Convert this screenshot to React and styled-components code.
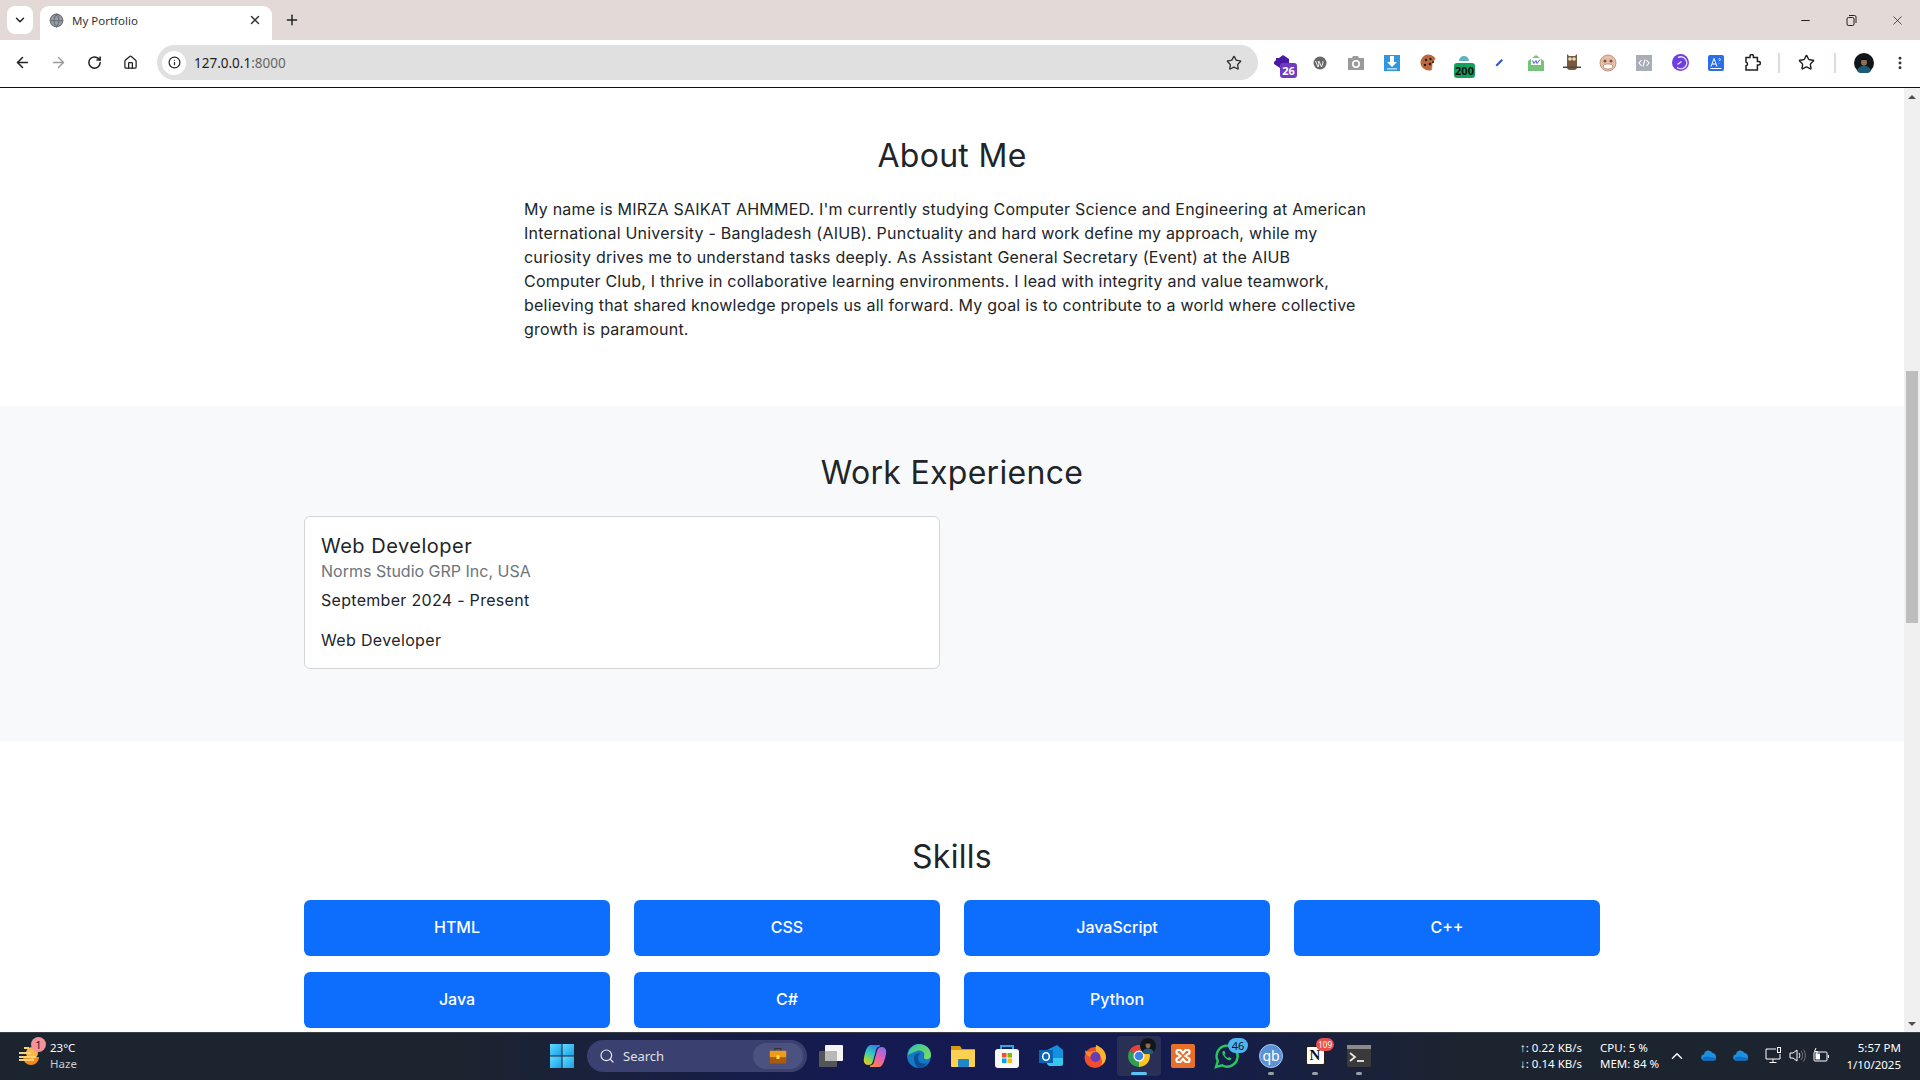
import styled, { createGlobalStyle } from 'styled-components'
import { ArrowLeft, ArrowRight, RotateCw, Home, Info, Star, MoreVertical, ChevronDown, ChevronUp, X, Plus, Search, Minus, Globe } from 'lucide-react'

const aboutLines = [
  "My name is MIRZA SAIKAT AHMMED. I'm currently studying Computer Science and Engineering at American",
  "International University - Bangladesh (AIUB). Punctuality and hard work define my approach, while my",
  "curiosity drives me to understand tasks deeply. As Assistant General Secretary (Event) at the AIUB",
  "Computer Club, I thrive in collaborative learning environments. I lead with integrity and value teamwork,",
  "believing that shared knowledge propels us all forward. My goal is to contribute to a world where collective",
  "growth is paramount.",
]
const skills = ['HTML', 'CSS', 'JavaScript', 'C++', 'Java', 'C#', 'Python']

const HouseIcon = () => (
  <svg width="24" height="24" viewBox="0 0 24 24">
    <path d="M2 11l2-2V7h3l4-3 6 4v6h-8l-1 3-6-4z" fill="#4a1aa6" />
  </svg>
)
const WordpressIcon = () => (
  <svg width="14" height="14" viewBox="0 0 14 14">
    <circle cx="7" cy="7" r="6.5" fill="#666" />
    <path d="M2.500 5 5 11l1-3-1-3M6 5l2.500 6L10 7c.3-1-.2-1.600-.5-2" fill="none" stroke="#eee" strokeWidth="1" />
  </svg>
)
const CameraIcon = () => (
  <svg width="18" height="16" viewBox="0 0 18 16">
    <path d="M1 3h4l1-2h5l1 2h5v12H1z" fill="#9b9b9b" />
    <circle cx="9" cy="9" r="3.200" fill="none" stroke="#fff" strokeWidth="1.600" />
  </svg>
)
const DownloadIcon = () => (
  <svg width="16" height="16" viewBox="0 0 16 16">
    <rect width="16" height="16" fill="#2f96e0" />
    <path d="M6 1h4v6h3l-5 5-5-5h3z" fill="#fff" />
    <rect x="3" y="13.400" width="10" height="1" fill="#fff" />
  </svg>
)
const CookieIcon = () => (
  <svg width="17" height="17" viewBox="0 0 17 17">
    <path d="M9 .5a8 8 0 1 0 7.500 8.500c-1.500 0-2.500-1-2.500-2-1.500 0-3-1.500-2.500-3C10 4 9 2 9 .5z" fill="#b9693c" transform="rotate(60 8.500 8.500)" />
    <g fill="#2e1c14">
      <circle cx="6" cy="6" r="1.200" /><circle cx="10.500" cy="5" r="1.200" /><circle cx="5" cy="11" r="1.200" /><circle cx="10" cy="10" r="1.300" /><circle cx="13" cy="8" r="1" />
    </g>
  </svg>
)
const LockIcon = () => (
  <svg width="12" height="16" viewBox="0 0 12 16">
    <path d="M1 6a5 5 0 0 1 10 0z" fill="#5fb3bd" />
  </svg>
)
const PenIcon = () => (
  <svg width="10" height="10" viewBox="0 0 10 10">
    <path d="M1 8 7 2l1.500 1.500-6 6z" fill="#2f55cf" transform="translate(-0.500 -1)" />
  </svg>
)
const MailIcon = () => (
  <svg width="16" height="18" viewBox="0 0 16 18">
    <path d="M0 7 8 1l8 6v10H0z" fill="#76c47a" />
    <rect x="3" y="4" width="10" height="7" fill="#fff" />
    <path d="m4.500 6.500 1.500 3 2-3 1 3 3-4" fill="none" stroke="#4a5fd0" strokeWidth="1" />
  </svg>
)
const OwlIcon = () => (
  <svg width="18" height="20" viewBox="0 0 18 20">
    <path d="M4 1l2 2h6l2-2v13a3 3 0 0 1-3 3H7a3 3 0 0 1-3-3z" fill="#7a5a3e" />
    <circle cx="7" cy="6" r="1.800" fill="#e8dcc8" /><circle cx="11" cy="6" r="1.800" fill="#e8dcc8" />
    <rect x="0" y="13.500" width="18" height="1.500" fill="#4a4a4a" />
  </svg>
)
const MonkeyIcon = () => (
  <svg width="18" height="20" viewBox="0 0 18 20">
    <circle cx="9" cy="10" r="8" fill="#e6bda6" stroke="#c59880" strokeWidth="1" />
    <circle cx="6" cy="8" r="1.500" fill="#7a5244" /><circle cx="12" cy="8" r="1.500" fill="#7a5244" />
    <ellipse cx="9" cy="13.500" rx="4.500" ry="2.500" fill="#fff" stroke="#a9806c" strokeWidth=".7" />
  </svg>
)
const CodeIcon = () => (
  <svg width="16" height="16" viewBox="0 0 16 16">
    <rect width="16" height="16" fill="#a9adb5" />
    <path d="M5.500 5 3 8l2.500 3M10.500 5 13 8l-2.500 3M9 4.500 7 11.500" fill="none" stroke="#fff" strokeWidth="1.100" />
  </svg>
)
const SpinIcon = () => (
  <svg width="17" height="17" viewBox="0 0 17 17">
    <circle cx="8.500" cy="8.500" r="8.500" fill="#6b3fe0" />
    <path d="M5 13.500a6 6 0 1 0 1-10M5.500 10.500l4-3" fill="none" stroke="#e9dcff" strokeWidth="1.500" />
  </svg>
)
const TranslateIcon = () => (
  <svg width="16" height="16" viewBox="0 0 16 16">
    <rect width="16" height="16" rx="2" fill="#2b6fe8" />
    <path d="M3 11.500 6 3.500 9 11.500M4 9h4M2.500 13.500h11M10.500 4c1-1 2.500 0 1.500 1.200l-1 1M11 8v.5" fill="none" stroke="#fff" strokeWidth="1" />
  </svg>
)
const PuzzleIcon = () => (
  <svg width="18" height="18" viewBox="0 0 18 18">
    <path d="M2 3.500h4V2.200a1.700 1.700 0 0 1 3.400 0v1.300h4v4h1.300a1.700 1.700 0 0 1 0 3.400h-1.300v5H2v-4a2 2 0 0 0 1.500-1.900A2 2 0 0 0 2 8.100z" fill="none" stroke="#1f1f1f" strokeWidth="1.500" transform="translate(1 0)" />
  </svg>
)
const AvatarIcon = ({ size }) => (
  <svg width={size} height={size} viewBox="0 0 20 20">
    <circle cx="10" cy="10" r="10" fill="#11161a" />
    <path d="M3 18c1-4 4-5 7-5s6 1 7 5a10 10 0 0 1-14 0z" fill="#1d5b78" />
    <ellipse cx="10" cy="9" rx="3" ry="3.800" fill="#8f6b55" />
    <path d="M7 7c0-3 6-3 6 0z" fill="#0b0b0b" />
  </svg>
)

const WeatherIcon = () => (
  <svg width="24" height="24" viewBox="0 0 24 24">
    <path d="M5 13h16a8 8 0 0 1-16 0z" fill="#f08c1e" />
    <circle cx="14" cy="9" r="6" fill="#f7b84a" />
    <g fill="#f5d27a">
      <rect x="6" y="3" width="5" height="2" /><rect x="1" y="8" width="12" height="2" /><rect x="1" y="12" width="17" height="2" /><rect x="1" y="15" width="15" height="2" />
    </g>
  </svg>
)
const WindowsIcon = () => (
  <svg width="24" height="24" viewBox="0 0 24 24">
    <defs>
      <linearGradient id="winBlue" x1="0" y1="0" x2="1" y2="1">
        <stop offset="0" stopColor="#5fdcff" /><stop offset="1" stopColor="#1a9ee8" />
      </linearGradient>
    </defs>
    <g fill="url(#winBlue)">
      <rect width="11.500" height="11.500" /><rect x="12.500" width="11.500" height="11.500" /><rect y="12.500" width="11.500" height="11.500" /><rect x="12.500" y="12.500" width="11.500" height="11.500" />
    </g>
  </svg>
)
const BriefcaseIcon = () => (
  <svg width="24" height="24" viewBox="0 0 24 24">
    <path d="M8 5V2h8v3" fill="none" stroke="#333" strokeWidth="1.500" />
    <rect x="1" y="5" width="22" height="9" fill="#f09a1a" />
    <rect x="1" y="14" width="22" height="8" fill="#a85a10" />
    <rect x="10" y="11" width="4" height="5" fill="#ffe24a" />
  </svg>
)
const TaskViewIcon = () => (
  <svg width="26" height="24" viewBox="0 0 26 24">
    <rect x="7" y="1" width="18" height="16" rx="1" fill="#f4f4f4" />
    <rect x="1" y="7" width="18" height="16" rx="1" fill="#5a5a5a" fillOpacity=".92" />
    <rect x="7" y="7" width="12" height="10" fill="#b8b8b8" />
  </svg>
)
const CopilotIcon = () => (
  <svg width="24" height="24" viewBox="0 0 24 24">
    <defs>
      <linearGradient id="copA" x1="0.700" y1="0" x2="0.200" y2="1">
        <stop offset="0" stopColor="#2c7fe8" /><stop offset=".45" stopColor="#35c9c0" /><stop offset=".75" stopColor="#8fd84a" /><stop offset="1" stopColor="#f5c32c" />
      </linearGradient>
      <linearGradient id="copB" x1="0.800" y1="0" x2="0.200" y2="1">
        <stop offset="0" stopColor="#8a6cf0" /><stop offset=".5" stopColor="#e85fb0" /><stop offset="1" stopColor="#f58a3c" />
      </linearGradient>
    </defs>
    <path d="M8 1h8c2 0 1 2-1 2-2 1-2 4-3 7l-2 7c-1 3-2 4-5 4-3 0-5-3-4-7C2 8 4 1 8 1z" fill="url(#copA)" />
    <path d="M16 23H8c-2 0-1-2 1-2 2-1 2-4 3-7l2-7c1-3 2-4 5-4 3 0 5 3 4 7-1 5-3 13-7 13z" fill="url(#copB)" />
  </svg>
)
const EdgeIcon = () => (
  <svg width="24" height="24" viewBox="0 0 24 24">
    <defs>
      <linearGradient id="edgeA" x1="0" y1="0" x2="1" y2="1">
        <stop offset="0" stopColor="#35c1a5" /><stop offset="1" stopColor="#7fe05a" />
      </linearGradient>
    </defs>
    <circle cx="12" cy="12" r="12" fill="#1478c8" />
    <path d="M1 11C2 4 7 0 12 0c7 0 12 5 12 11 0 3-3 5-6 4-2-1 0-3-1-6-1-2-4-3-7-2-4 1-7 3-9 4z" fill="url(#edgeA)" />
    <path d="M7 14c0-4 4-6 7-4-2 0-3 2-3 4 0 4 4 7 9 5-2 3-5 5-8 5-3-1-5-6-5-10z" fill="#0c4f94" />
  </svg>
)
const FolderIcon = () => (
  <svg width="24" height="22" viewBox="0 0 24 22">
    <path d="M0 1h9l2 3h13v3H0z" fill="#d99a10" />
    <rect y="5" width="24" height="17" rx="1" fill="#fcd050" />
    <rect x="7" y="14" width="11" height="8" rx="1" fill="#1f86c8" />
  </svg>
)
const StoreIcon = () => (
  <svg width="24" height="24" viewBox="0 0 24 24">
    <path d="M6 6V2h12v4" fill="none" stroke="#2aa8e0" strokeWidth="2" />
    <rect y="5" width="24" height="19" rx="3" fill="#f8f8f8" />
    <rect x="7" y="9" width="4.500" height="4.500" fill="#f25022" /><rect x="12.500" y="9" width="4.500" height="4.500" fill="#7fba00" />
    <rect x="7" y="14.500" width="4.500" height="4.500" fill="#00a4ef" /><rect x="12.500" y="14.500" width="4.500" height="4.500" fill="#ffb900" />
  </svg>
)
const OutlookIcon = () => (
  <svg width="24" height="24" viewBox="0 0 24 24">
    <path d="M8 6 18 1l6 5v12H8z" fill="#1490df" />
    <path d="M8 14h16v6a2 2 0 0 1-2 2H10l-2-2z" fill="#35c8ee" />
    <rect y="6" width="14" height="13" fill="#0a64b8" />
    <ellipse cx="7" cy="12.500" rx="3.300" ry="3.800" fill="none" stroke="#fff" strokeWidth="1.600" />
  </svg>
)
const FirefoxIcon = () => (
  <svg width="24" height="24" viewBox="0 0 24 24">
    <circle cx="12" cy="13.500" r="10.500" fill="#f04f30" />
    <path d="M13 1c5 2 10 6 10 12 0 4-2 7-5 8 2-3 1-7-2-9-2-2-4-5-3-11z" fill="#fbb42c" />
    <path d="M2 6c1 2 3 1 5 2 3-2 6-1 8 1-5 0-2 4-6 4-4 0-7-3-7-7z" fill="#ff8a2c" />
    <circle cx="12.500" cy="13" r="5" fill="#6a3bb8" />
  </svg>
)
const ChromeIcon = () => (
  <svg width="24" height="24" viewBox="0 0 24 24">
    <path d="M12 12 2.500 6.500a11 11 0 0 1 19 0z" fill="#e0443a" />
    <path d="M12 12 2.500 6.500A11 11 0 0 0 12 23z" fill="#2f9e52" />
    <path d="M12 12 21.500 6.500A11 11 0 0 1 12 23z" fill="#f9c51c" />
    <circle cx="12" cy="12" r="5.500" fill="#fff" /><circle cx="12" cy="12" r="4.300" fill="#3b82e6" />
  </svg>
)
const XamppIcon = () => (
  <svg width="24" height="24" viewBox="0 0 24 24">
    <rect width="24" height="24" rx="2" fill="#e8702a" />
    <path d="M7 6h2.500L12 9l2.500-3H17c2 0 2 4 0 4l-2.500 2 2.500 2c2 0 2 4 0 4h-2.500L12 15l-2.500 3H7c-2 0-2-4 0-4l2.500-2L7 10c-2 0-2-4 0-4z" fill="none" stroke="#fff" strokeWidth="2.200" />
  </svg>
)
const WhatsappIcon = () => (
  <svg width="26" height="26" viewBox="0 0 26 26">
    <path d="M2 24l1.800-6A10.500 10.500 0 1 1 8 22.300z" fill="none" stroke="#25c95e" strokeWidth="2.400" />
    <path d="M9 8c-1 1-1 3 1 5.500s5 4.500 6.500 3.500l1-1.500-2.500-1.500-1 1c-1.500-.5-3-2-3.500-3.500l1-1L10.500 8z" fill="#25c95e" />
  </svg>
)
const TerminalIcon = () => (
  <svg width="24" height="24" viewBox="0 0 24 24">
    <rect y="1" width="24" height="22" rx="2" fill="#3a3a3a" />
    <rect y="1" width="24" height="4" fill="#8a8a8a" />
    <path d="m3 9 5 4-5 4" fill="none" stroke="#e8e8e8" strokeWidth="1.800" />
    <path d="M10 17h7" stroke="#e8e8e8" strokeWidth="1.800" />
  </svg>
)

const CloudIcon = () => (
  <svg width="16" height="11" viewBox="0 0 16 11">
    <path d="M3.500 10.500a3 3 0 0 1-.5-6 4.500 4.500 0 0 1 8.500-1.500A4 4 0 0 1 13 10.500z" fill="#1f8fe0" />
    <path d="M1 9c2-3 6-3 8-2l6 1c1 2-1 2.500-2 2.500H3.500C2 10.500 1.300 10 1 9z" fill="#0f6fc4" />
  </svg>
)
const MonitorIcon = () => (
  <svg width="17" height="17" viewBox="0 0 17 17" fill="none" stroke="#fff" strokeWidth="1">
    <path d="M11 2H1v10h14V7M8 12v3M4.500 15.500h7" />
    <rect x="12.500" y=".5" width="3" height="5" fill="#1c2430" />
  </svg>
)
const SpeakerIcon = () => (
  <svg width="17" height="15" viewBox="0 0 17 15" fill="none" stroke="#fff" strokeWidth="1">
    <path d="M1 5h3l4-3v11l-4-3H1z" />
    <path d="M10 5c1 1.500 1 3.500 0 5" />
    <path d="M12 3c2 2.500 2 6.500 0 9M14.300 1.500c2.700 3.500 2.700 8.500 0 12" stroke="#777" />
  </svg>
)
const BatteryIcon = () => (
  <svg width="17" height="15" viewBox="0 0 17 15" fill="none" stroke="#fff" strokeWidth="1">
    <rect x="1" y="4" width="13" height="9" rx="1" />
    <rect x="2.500" y="5.500" width="4.500" height="6" fill="#fff" stroke="none" />
    <path d="M15.500 7v3" />
    <path d="M3 0 1.500 3.500h3L3 7" />
  </svg>
)

function App() {
  return (
    <>
      <GlobalStyle />
      <Screen>
        <TabBar>
          <TabSearch><ChevronDown size={14} strokeWidth={2.5} /></TabSearch>
          <Tab>
            <Globe size={15} color="#6e7479" fill="#9aa0a6" />
            <TabTitle>My Portfolio</TabTitle>
            <X size={14} strokeWidth={2.5} color="#333" />
          </Tab>
          <NewTab><Plus size={16} strokeWidth={2.2} /></NewTab>
          <WindowControls>
            <WindowButton><Minus size={13} strokeWidth={2} /></WindowButton>
            <WindowButton>
              <svg width="11" height="11" viewBox="0 0 11 11" fill="none" stroke="#222"><rect x="1" y="2.500" width="7" height="8" rx="1.500" /><path d="M3 .5h5.500A1.500 1.500 0 0 1 10 2v6" /></svg>
            </WindowButton>
            <WindowButton><X size={15} strokeWidth={1.2} /></WindowButton>
          </WindowControls>
        </TabBar>
        <Toolbar>
          <NavButton><ArrowLeft size={17} strokeWidth={2.2} /></NavButton>
          <NavButton $off><ArrowRight size={17} strokeWidth={2} /></NavButton>
          <NavButton><RotateCw size={15} strokeWidth={2.4} /></NavButton>
          <NavButton><Home size={15} strokeWidth={2} /></NavButton>
          <Omnibox>
            <SiteInfo><Info size={13} strokeWidth={2.2} /></SiteInfo>
            <Url>127.0.0.1<UrlPort>:8000</UrlPort></Url>
            <Star size={16} strokeWidth={2} color="#333" />
          </Omnibox>
          <Extensions>
            <ExtButton><HouseIcon /><CountBadge $bg="#6f3ac4" $w={17}>26</CountBadge></ExtButton>
            <ExtButton><WordpressIcon /></ExtButton>
            <ExtButton><CameraIcon /></ExtButton>
            <ExtButton><DownloadIcon /></ExtButton>
            <ExtButton><CookieIcon /></ExtButton>
            <ExtButton><LockIcon /><CountBadge $bg="#14a05c" $color="#111" $w={21}>200</CountBadge></ExtButton>
            <ExtButton><PenIcon /></ExtButton>
            <ExtButton><MailIcon /></ExtButton>
            <ExtButton><OwlIcon /></ExtButton>
            <ExtButton><MonkeyIcon /></ExtButton>
            <ExtButton><CodeIcon /></ExtButton>
            <ExtButton><SpinIcon /></ExtButton>
            <ExtButton><TranslateIcon /></ExtButton>
            <ExtButton><PuzzleIcon /></ExtButton>
            <ToolDivider $gap={8} />
            <ExtButton><Star size={17} strokeWidth={2} color="#222" /></ExtButton>
            <ToolDivider $gap={10} />
            <ExtButton><AvatarIcon size={20} /></ExtButton>
            <ExtButton><MoreVertical size={16} strokeWidth={2.4} color="#333" /></ExtButton>
          </Extensions>
        </Toolbar>
        <Viewport>
          <Page>
            <AboutSection>
              <Heading>About Me</Heading>
              <AboutText>
                {aboutLines.map((line) => <AboutLine key={line}>{line}</AboutLine>)}
              </AboutText>
            </AboutSection>
            <WorkSection>
              <Heading>Work Experience</Heading>
              <Card>
                <CardTitle>Web Developer</CardTitle>
                <CardCompany>Norms Studio GRP Inc, USA</CardCompany>
                <CardDate>September 2024 - Present</CardDate>
                <CardText>Web Developer</CardText>
              </Card>
            </WorkSection>
            <SkillsSection>
              <Heading>Skills</Heading>
              <SkillGrid>
                {skills.map((skill) => <SkillButton key={skill}>{skill}</SkillButton>)}
              </SkillGrid>
            </SkillsSection>
          </Page>
          <Scrollbar>
            <ScrollArrow $up />
            <ScrollTrack><ScrollThumb /></ScrollTrack>
            <ScrollArrow />
          </Scrollbar>
        </Viewport>
        <Taskbar>
          <Weather>
            <WeatherGlyph>
              <WeatherIcon />
              <WeatherBadge>1</WeatherBadge>
            </WeatherGlyph>
            <WeatherText>
              <span>23°C</span>
              <WeatherSub>Haze</WeatherSub>
            </WeatherText>
          </Weather>
          <TaskIcons>
            <TaskButton><WindowsIcon /></TaskButton>
            <SearchPill>
              <Search size={16} strokeWidth={1.8} color="#e8e8e8" />
              <SearchLabel>Search</SearchLabel>
              <SearchImage><BriefcaseIcon /></SearchImage>
            </SearchPill>
            <TaskButton><TaskViewIcon /></TaskButton>
            <TaskButton><CopilotIcon /></TaskButton>
            <TaskButton><EdgeIcon /></TaskButton>
            <TaskButton><FolderIcon /></TaskButton>
            <TaskButton><StoreIcon /></TaskButton>
            <TaskButton><OutlookIcon /></TaskButton>
            <TaskButton><FirefoxIcon /></TaskButton>
            <TaskButton $active>
              <ChromeIcon />
              <TaskAvatar><AvatarIcon size={16} /></TaskAvatar>
              <TaskDot $active />
            </TaskButton>
            <TaskButton><XamppIcon /></TaskButton>
            <TaskButton><WhatsappIcon /><TaskBadge $bg="#4db5ef" $color="#111">46</TaskBadge></TaskButton>
            <TaskButton><QbLogo>qb</QbLogo><TaskDot /></TaskButton>
            <TaskButton>
              <NotionLogo>N</NotionLogo>
              <TaskBadge $bg="#e8504a" $color="#fff" $small>109</TaskBadge>
              <TaskDot />
            </TaskButton>
            <TaskButton><TerminalIcon /><TaskDot /></TaskButton>
          </TaskIcons>
          <Tray>
            <TrayStats $w={80}>
              <span>↑: 0.22 KB/s</span>
              <span>↓: 0.14 KB/s</span>
            </TrayStats>
            <TrayStats $w={65}>
              <span>CPU: 5 %</span>
              <span>MEM: 84 %</span>
            </TrayStats>
            <TrayIcons>
              <TraySlot><ChevronUp size={18} strokeWidth={2} color="#fff" /></TraySlot>
              <TrayClouds>
                <TraySlot $wide><CloudIcon /></TraySlot>
                <TraySlot $wide><CloudIcon /></TraySlot>
              </TrayClouds>
              <TraySlot><MonitorIcon /></TraySlot>
              <TraySlot><SpeakerIcon /></TraySlot>
              <TraySlot><BatteryIcon /></TraySlot>
            </TrayIcons>
            <Clock>
              <span>5:57 PM</span>
              <span>1/10/2025</span>
            </Clock>
          </Tray>
        </Taskbar>
      </Screen>
    </>
  )
}

export default App

const GlobalStyle = createGlobalStyle`
  * { box-sizing: border-box; }
  html, body { margin: 0; height: 100%; overflow: hidden; }
  body { font-family: "Inter", "Liberation Sans", sans-serif; color: #212529; }
`
const Screen = styled.div`
  width: 1920px;
  height: 1080px;
  display: flex;
  flex-direction: column;
  overflow: hidden;
`
const TabBar = styled.div`
  height: 40px;
  flex: none;
  background: #e3dad8;
  display: flex;
  align-items: flex-end;
  padding-left: 7px;
`
const TabSearch = styled.div`
  width: 26px;
  height: 28px;
  margin-bottom: 6px;
  border-radius: 8px;
  background: #fff;
  display: flex;
  align-items: center;
  justify-content: center;
  color: #222;
`
const Tab = styled.div`
  width: 232px;
  height: 34px;
  margin-left: 7px;
  padding: 0 10px 6px 9px;
  background: #fff;
  border-radius: 9px 9px 0 0;
  display: flex;
  align-items: center;
  gap: 8px;
`
const TabTitle = styled.span`
  flex: 1;
  font: 11.5px "Noto Sans", sans-serif;
  color: #333;
`
const NewTab = styled.div`
  width: 36px;
  height: 34px;
  margin-left: 2px;
  padding-bottom: 6px;
  display: flex;
  align-items: center;
  justify-content: center;
  color: #222;
`
const WindowControls = styled.div`
  margin-left: auto;
  align-self: flex-start;
  display: flex;
`
const WindowButton = styled.div`
  width: 46px;
  height: 40px;
  display: flex;
  align-items: center;
  justify-content: center;
  color: #222;
`
const Toolbar = styled.div`
  height: 48px;
  flex: none;
  background: #fff;
  border-bottom: 1px solid #111;
  border-radius: 8px 8px 0 0;
  display: flex;
  align-items: center;
  padding: 0 0 2px 4px;
`
const NavButton = styled.div`
  width: 36px;
  height: 36px;
  display: flex;
  align-items: center;
  justify-content: center;
  color: ${(p) => (p.$off ? '#9a9a9a' : '#222')};
`
const Omnibox = styled.div`
  width: 1101px;
  height: 35px;
  margin-left: 9px;
  padding: 0 16px 0 5px;
  background: #e0e0e0;
  border-radius: 18px;
  display: flex;
  align-items: center;
`
const SiteInfo = styled.div`
  width: 24px;
  height: 24px;
  border-radius: 50%;
  background: #fff;
  display: flex;
  align-items: center;
  justify-content: center;
  color: #222;
`
const Url = styled.div`
  flex: 1;
  margin-left: 8px;
  font: 13.5px "Noto Sans", sans-serif;
  color: #222;
`
const UrlPort = styled.span`
  color: #666;
`
const Extensions = styled.div`
  margin-left: 8px;
  display: flex;
  align-items: center;
`
const ExtButton = styled.div`
  position: relative;
  width: 36px;
  height: 36px;
  display: flex;
  align-items: center;
  justify-content: center;
`
const CountBadge = styled.span`
  position: absolute;
  right: ${(p) => (p.$w > 20 ? 7 : 5)}px;
  bottom: 3px;
  width: ${(p) => p.$w}px;
  height: 15px;
  border-radius: 3px;
  background: ${(p) => p.$bg};
  color: ${(p) => p.$color || '#fff'};
  font: 700 11px/15px "Noto Sans", sans-serif;
  text-align: center;
`
const ToolDivider = styled.div`
  width: 2px;
  height: 20px;
  margin: 0 ${(p) => p.$gap}px;
  background: #e3dad8;
`
const Viewport = styled.div`
  flex: 1;
  min-height: 0;
  display: flex;
  overflow: hidden;
  background: #fff;
`
const Page = styled.main`
  flex: 1;
  min-width: 0;
  overflow: hidden;
`
const Heading = styled.h2`
  margin: 0 0 24px;
  font-size: 32px;
  font-weight: 400;
  line-height: 38.4px;
  letter-spacing: .3px;
  text-align: center;
`
const AboutSection = styled.section`
  padding: 49px 0 0;
  height: 318px;
`
const AboutText = styled.div`
  width: 856px;
  margin: -2px auto 0;
  font-size: 16px;
  line-height: 24px;
  letter-spacing: .22px;
`
const AboutLine = styled.div`
  white-space: nowrap;
`
const WorkSection = styled.section`
  padding: 48px 304px;
  height: 336px;
  background: #f8f9fa;
`
const Card = styled.article`
  width: 636px;
  height: 153px;
  padding: 17px 16px 16px;
  background: #fff;
  border: 1px solid #d3d4d5;
  border-radius: 6px;
`
const CardTitle = styled.h5`
  margin: 0 0 4px;
  font-size: 20px;
  font-weight: 400;
  line-height: 24px;
  letter-spacing: .5px;
`
const CardCompany = styled.h6`
  margin: 0 0 6.5px;
  font-size: 16px;
  font-weight: 400;
  line-height: 19.2px;
  color: #6c757d;
`
const CardDate = styled.p`
  margin: 0 0 16px;
  font-size: 16px;
  line-height: 24px;
  letter-spacing: .3px;
`
const CardText = styled.p`
  margin: 0;
  font-size: 16px;
  line-height: 24px;
  letter-spacing: .35px;
`
const SkillsSection = styled.section`
  padding: 96px 304px 0;
`
const SkillGrid = styled.div`
  display: grid;
  grid-template-columns: repeat(4, 306px);
  gap: 16px 24px;
`
const SkillButton = styled.button`
  height: 56px;
  padding: 0 0 2px;
  border: none;
  border-radius: 6px;
  background: #0d6efd;
  color: #fff;
  font-family: inherit;
  font-size: 16px;
  font-weight: 500;
`
const Scrollbar = styled.div`
  width: 16px;
  flex: none;
  background: #f0f0f0;
  display: flex;
  flex-direction: column;
`
const ScrollArrow = styled.div`
  height: 17px;
  flex: none;
  display: flex;
  align-items: center;
  justify-content: center;
  &::before {
    content: '';
    border-left: 4px solid transparent;
    border-right: 4px solid transparent;
    ${(p) => (p.$up ? 'border-bottom: 4px solid #505050;' : 'border-top: 4px solid #505050;')}
  }
`
const ScrollTrack = styled.div`
  flex: 1;
  padding: 266px 2px 0;
`
const ScrollThumb = styled.div`
  height: 252px;
  background: #bdbdbd;
`
const Taskbar = styled.footer`
  height: 48px;
  flex: none;
  display: flex;
  align-items: center;
  padding-bottom: 2px;
  color: #fff;
  border-top: 1px solid #3a3f47;
  background: linear-gradient(90deg, #1c2430 0%, #1c2430 24%, #141a52 45%, #141c50 60%, #1c2430 76%, #1c2430 100%);
  font-family: "Noto Sans", sans-serif;
`
const Weather = styled.div`
  width: 540px;
  flex: none;
  padding-left: 18px;
  display: flex;
  align-items: center;
  gap: 8px;
`
const WeatherGlyph = styled.div`
  position: relative;
  width: 24px;
  height: 24px;
`
const WeatherBadge = styled.span`
  position: absolute;
  top: -7px;
  right: -4px;
  width: 15px;
  height: 15px;
  border-radius: 50%;
  background: #f4929c;
  color: #222;
  font-size: 11px;
  line-height: 15px;
  text-align: center;
`
const WeatherText = styled.div`
  display: flex;
  flex-direction: column;
  font-size: 11.5px;
  line-height: 16px;
`
const WeatherSub = styled.span`
  color: #c8cbd0;
`
const TaskIcons = styled.div`
  display: flex;
  align-items: center;
`
const TaskButton = styled.div`
  position: relative;
  width: 44px;
  height: 40px;
  display: flex;
  align-items: center;
  justify-content: center;
  border-radius: 4px;
  ${(p) => p.$active && 'background: #2a2f55;'}
`
const TaskDot = styled.span`
  position: absolute;
  bottom: 1px;
  left: 50%;
  transform: translateX(-50%);
  width: ${(p) => (p.$active ? 16 : 6)}px;
  height: 3px;
  border-radius: 2px;
  background: ${(p) => (p.$active ? '#5cc4f4' : '#9aa0a8')};
`
const TaskAvatar = styled.span`
  position: absolute;
  top: 2px;
  right: 5px;
  display: flex;
`
const TaskBadge = styled.span`
  position: absolute;
  top: 2px;
  right: ${(p) => (p.$small ? 3 : 1)}px;
  min-width: ${(p) => (p.$small ? 13 : 20)}px;
  height: ${(p) => (p.$small ? 13 : 15)}px;
  padding: 0 2px;
  border-radius: 8px;
  background: ${(p) => p.$bg};
  color: ${(p) => p.$color};
  font-size: ${(p) => (p.$small ? 8 : 11)}px;
  line-height: ${(p) => (p.$small ? 13 : 15)}px;
  text-align: center;
`
const QbLogo = styled.div`
  width: 24px;
  height: 24px;
  border-radius: 50%;
  background: #5b93d8;
  border: 1px solid #a9c8ee;
  color: #fff;
  font-size: 14px;
  line-height: 21px;
  text-align: center;
`
const NotionLogo = styled.div`
  width: 21px;
  height: 21px;
  border-radius: 3px;
  background: #fff;
  border: 2px solid #222;
  color: #111;
  font: 700 15px/17px "Liberation Serif", serif;
  text-align: center;
`
const SearchPill = styled.div`
  width: 220px;
  height: 32px;
  margin: 0 2px 0 3px;
  padding: 0 4px 0 12px;
  border-radius: 16px;
  background: #3a4170;
  display: flex;
  align-items: center;
  gap: 8px;
`
const SearchLabel = styled.span`
  flex: 1;
  font-size: 13px;
  color: #e0e0e0;
`
const SearchImage = styled.div`
  width: 50px;
  height: 26px;
  border-radius: 13px;
  background: #4b5280;
  display: flex;
  align-items: center;
  justify-content: center;
  svg { width: 18px; height: 18px; }
`
const Tray = styled.div`
  margin-left: auto;
  display: flex;
  align-items: center;
  padding-right: 19px;
`
const TrayStats = styled.div`
  display: flex;
  flex-direction: column;
  width: ${(p) => p.$w}px;
  font-size: 11.5px;
  line-height: 16px;
  white-space: nowrap;
`
const TrayIcons = styled.div`
  display: flex;
  align-items: center;
`
const TrayClouds = styled.div`
  display: flex;
  padding: 0 4px;
`
const TraySlot = styled.div`
  width: ${(p) => (p.$wide ? 32 : 24)}px;
  display: flex;
  justify-content: center;
`
const Clock = styled.div`
  width: 66px;
  margin-left: 2px;
  display: flex;
  flex-direction: column;
  align-items: flex-end;
  font-size: 11.5px;
  line-height: 17px;
`
